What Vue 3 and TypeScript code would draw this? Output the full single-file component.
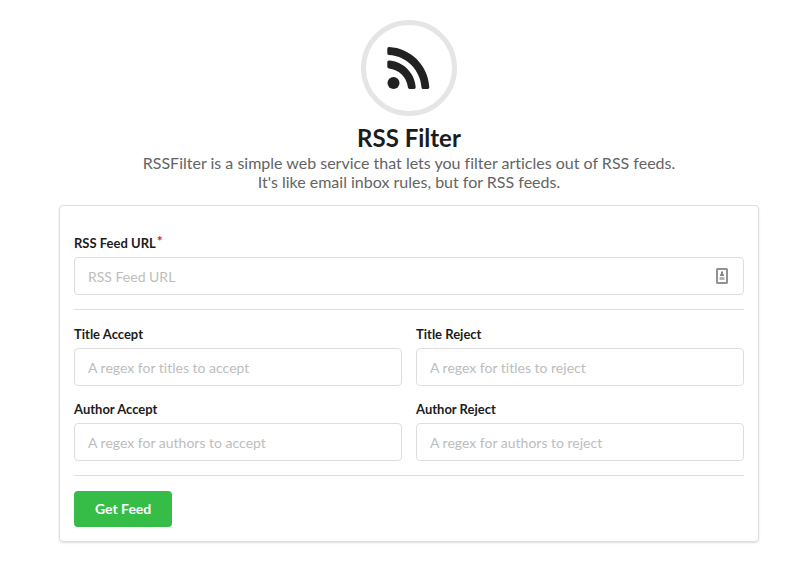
<script setup lang="ts">
import { reactive, ref } from 'vue'

interface FilterField {
  id: string
  label: string
  placeholder: string
}

const filters: FilterField[] = [
  { id: 'title-accept', label: 'Title Accept', placeholder: 'A regex for titles to accept' },
  { id: 'title-reject', label: 'Title Reject', placeholder: 'A regex for titles to reject' },
  { id: 'author-accept', label: 'Author Accept', placeholder: 'A regex for authors to accept' },
  { id: 'author-reject', label: 'Author Reject', placeholder: 'A regex for authors to reject' },
]

const feedUrl = ref('')
const values = reactive<Record<string, string>>({})
</script>

<template>
  <main class="page">
    <header class="intro">
      <div class="badge">
        <svg class="rss" viewBox="0 0 44 42" aria-hidden="true">
          <circle cx="6.5" cy="36" r="6" />
          <path d="M1.9 13.6C16.1 14.4 27.7 26 28.7 40.2Q28.8 42 27 42H22.7Q21.1 42 20.9 40.3C19.9 30.2 11.9 22.3 1.9 21.4Q.3 21.2 .3 19.6V15.2Q.3 13.5 1.9 13.6Z" />
          <path d="M2 0C23.7 1 41.3 18.5 42.3 40.2Q42.4 42 40.6 42H36.2Q34.6 42 34.5 40.4C33.4 22.9 19.5 8.9 1.9 7.9Q.3 7.8 .3 6.2V1.7Q.3 0 2 0Z" />
        </svg>
      </div>
      <h1 class="title">RSS Filter</h1>
      <p class="lead">
        RSSFilter is a simple web service that lets you filter articles out of RSS feeds.<br />
        It's like email inbox rules, but for RSS feeds.
      </p>
    </header>

    <form class="card" @submit.prevent>
      <div class="field">
        <label class="label" for="feed-url">RSS Feed URL<span class="required">*</span></label>
        <div class="control">
          <input id="feed-url" v-model="feedUrl" class="input" type="text" placeholder="RSS Feed URL" required />
          <svg class="autofill" viewBox="0 0 12 16" aria-hidden="true">
            <rect x="1" y="1" width="10" height="14" rx="0.5" fill="#fff" stroke="#929292" stroke-width="2" />
            <path d="M5 3.5h2v2l1 1.5v1H4V7l1-1.5z" fill="#858585" />
            <path d="M3.5 9h5v3h-5z" fill="#b4b4b4" />
          </svg>
        </div>
      </div>
      <hr class="divider" />
      <div class="filters">
        <div v-for="field in filters" :key="field.id" class="field">
          <label class="label" :for="field.id">{{ field.label }}</label>
          <input :id="field.id" v-model="values[field.id]" class="input" type="text" :placeholder="field.placeholder" />
        </div>
      </div>
      <hr class="divider" />
      <button class="submit" type="submit">Get Feed</button>
    </form>
  </main>
</template>

<style>
body {
  background: #fff;
}
</style>

<style scoped>
.page,
.page * {
  box-sizing: border-box;
}

.page {
  padding: 20px 51px 36px 59px;
  font-family: Lato, 'Liberation Sans', sans-serif;
  font-size: 14px;
  font-variant-ligatures: none;
  color: #1c1c1d;
}

.intro {
  display: flex;
  flex-direction: column;
  align-items: center;
  margin-bottom: 14px;
  text-align: center;
}

.badge {
  display: flex;
  align-items: center;
  justify-content: center;
  width: 96px;
  height: 96px;
  border: 5px solid #e5e5e5;
  border-radius: 50%;
}

.rss {
  width: 44px;
  height: 42px;
  fill: #212121;
}

.title {
  margin: 6px 0 0;
  font-size: 24px;
  font-weight: 700;
  line-height: 31px;
}

.lead {
  margin: 0;
  font-size: 16px;
  line-height: 19px;
  color: #646464;
}

.card {
  display: flex;
  flex-direction: column;
  gap: 14px;
  max-width: 700px;
  margin: 0 auto;
  padding: 28px 14px 14px;
  border: 1px solid #dededf;
  border-radius: 4px;
  box-shadow: 0 1px 2px rgba(34, 36, 38, 0.15);
}

.field {
  display: flex;
  flex-direction: column;
  gap: 4px;
  min-width: 0;
}

.label {
  font-size: 13px;
  font-weight: 700;
  line-height: 19px;
}

.required {
  margin-left: 1px;
  font-size: 14px;
  line-height: 1;
  vertical-align: top;
  color: #d01f2c;
}

.control {
  position: relative;
}

.input {
  display: block;
  width: 100%;
  height: 38px;
  padding: 0 13px;
  border: 1px solid #dededf;
  border-radius: 4px;
  background: #fff;
  font: inherit;
  font-variant-ligatures: none;
  color: #212121;
}

.input::placeholder {
  color: #bdbdbd;
  opacity: 1;
}

.autofill {
  position: absolute;
  top: 11px;
  right: 16px;
  width: 12px;
  height: 16px;
}

.divider {
  width: 100%;
  height: 2px;
  margin: 0;
  border: 0;
  border-top: 1px solid #dededf;
}

.filters {
  display: grid;
  grid-template-columns: 1fr 1fr;
  gap: 14px;
}

.submit {
  align-self: flex-start;
  height: 36px;
  padding: 0 21px 2px;
  border: 0;
  border-radius: 4px;
  background: #35bd48;
  font: inherit;
  font-weight: 700;
  color: #fff;
}
</style>
